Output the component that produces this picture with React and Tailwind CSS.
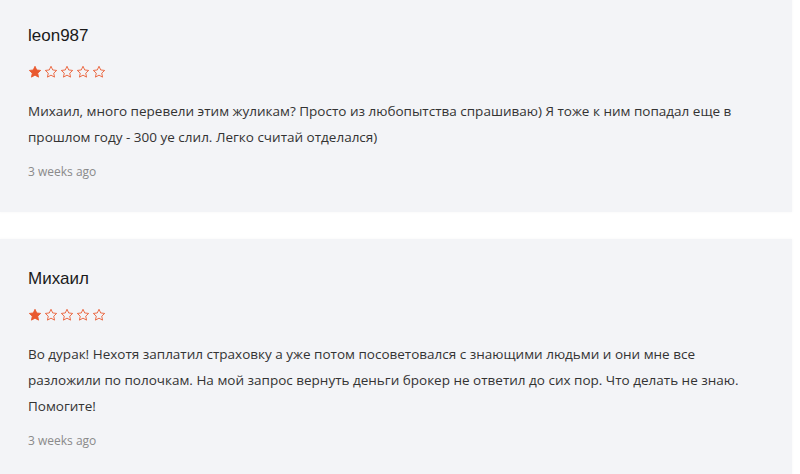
import React from 'react'

const reviews = [
  {
    name: 'leon987',
    rating: 1,
    text: 'Михаил, много перевели этим жуликам? Просто из любопытства спрашиваю) Я тоже к ним попадал еще в прошлом году - 300 уе слил. Легко считай отделался)',
    time: '3 weeks ago',
  },
  {
    name: 'Михаил',
    rating: 1,
    text: 'Во дурак! Нехотя заплатил страховку а уже потом посоветовался с знающими людьми и они мне все разложили по полочкам. На мой запрос вернуть деньги брокер не ответил до сих пор. Что делать не знаю. Помогите!',
    time: '3 weeks ago',
  },
]

const Star = ({ filled }) => (
  <svg width="14" height="14" viewBox="0 0 24 24" className="block">
    <path
      d="M12 2.2l2.95 6.3 6.75.8-5 4.7 1.35 6.8L12 17.4l-6.05 3.4 1.35-6.8-5-4.7 6.75-.8z"
      fill={filled ? '#e9592f' : 'none'}
      stroke="#e9592f"
      strokeWidth="1.5"
      strokeLinejoin="round"
    />
  </svg>
)

const Review = ({ review }) => (
  <div className="w-[792px] bg-[#f3f4f7] px-[28px] pt-[28px] pb-[31px] shadow-[0_0_3px_rgba(0,0,0,0.04)]">
    <div className="text-[17px] leading-[24px] text-[#1a1a1a] font-['Liberation_Sans',Arial,sans-serif]">
      {review.name}
    </div>
    <div className="flex gap-[2px] mt-[17px]">
      {[1, 2, 3, 4, 5].map((i) => (
        <Star key={i} filled={i <= review.rating} />
      ))}
    </div>
    <p className="mt-[19px] text-[13.5px] leading-[26px] text-[#333] font-['Open_Sans',sans-serif]">
      {review.text}
    </p>
    <div className="mt-[13px] text-[12px] leading-[18px] text-[#8a8a8a] font-['Open_Sans',sans-serif]">
      {review.time}
    </div>
  </div>
)

const App = () => {
  return (
    <div className="bg-white h-[474px] overflow-hidden">
      <div className="flex flex-col gap-[27px] -mt-[4px]">
        {reviews.map((r, i) => (
          <Review key={i} review={r} />
        ))}
      </div>
    </div>
  )
}

export default App
